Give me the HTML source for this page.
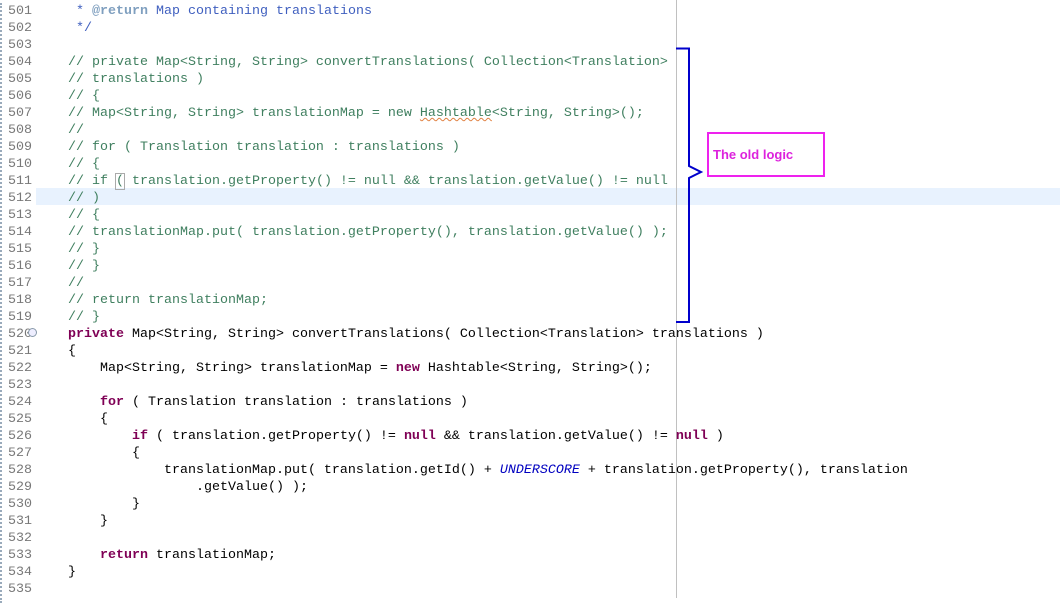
<!DOCTYPE html>
<html><head><style>
body{margin:0;width:1060px;height:598px;background:#fff;overflow:hidden;position:relative;font-family:"Liberation Mono",monospace;font-size:13.33px}
.ln{position:absolute;left:0;top:3px;width:34px;color:#787878;line-height:17px;padding-left:6px;border-left:2px dotted #9ab;height:600px}
.code{position:absolute;left:36px;top:3px;line-height:17px;white-space:pre;color:#000}
.c{color:#3f7f5f}.j{color:#3f5fbf}.t{color:#7f9fbf;font-weight:bold}.k{color:#7f0055;font-weight:bold}.u{color:#0000c0;font-style:italic}
.hl{position:absolute;left:36px;right:0;top:188px;height:17px;background:#e8f2fe}
.pm{position:absolute;left:676px;top:0;width:1px;height:598px;background:#c0c0c0}
.sq{text-decoration:underline wavy #e08040;text-decoration-thickness:1px}
</style></head><body>
<div class="hl"></div>
<div class="pm"></div>
<div class="ln">501<br>502<br>503<br>504<br>505<br>506<br>507<br>508<br>509<br>510<br>511<br>512<br>513<br>514<br>515<br>516<br>517<br>518<br>519<br>520<br>521<br>522<br>523<br>524<br>525<br>526<br>527<br>528<br>529<br>530<br>531<br>532<br>533<br>534<br>535</div>
<div style="position:absolute;left:28px;top:328px;width:7px;height:7px;border:1px solid #8899aa;border-radius:50%;background:#eef"></div>
<div class="code"><span class="j">     * <span class="t">@return</span> Map containing translations</span>
<span class="j">     */</span>

<span class="c">    // private Map&lt;String, String&gt; convertTranslations( Collection&lt;Translation&gt;</span>
<span class="c">    // translations )</span>
<span class="c">    // {</span>
<span class="c">    // Map&lt;String, String&gt; translationMap = new <span class="sq">Hashtable</span>&lt;String, String&gt;();</span>
<span class="c">    //</span>
<span class="c">    // for ( Translation translation : translations )</span>
<span class="c">    // {</span>
<span class="c">    // if <span style="outline:1px solid #aaa">(</span> translation.getProperty() != null &amp;&amp; translation.getValue() != null</span>
<span class="c">    // )</span>
<span class="c">    // {</span>
<span class="c">    // translationMap.put( translation.getProperty(), translation.getValue() );</span>
<span class="c">    // }</span>
<span class="c">    // }</span>
<span class="c">    //</span>
<span class="c">    // return translationMap;</span>
<span class="c">    // }</span>
    <span class="k">private</span> Map&lt;String, String&gt; convertTranslations( Collection&lt;Translation&gt; translations )
    {
        Map&lt;String, String&gt; translationMap = <span class="k">new</span> Hashtable&lt;String, String&gt;();

        <span class="k">for</span> ( Translation translation : translations )
        {
            <span class="k">if</span> ( translation.getProperty() != <span class="k">null</span> &amp;&amp; translation.getValue() != <span class="k">null</span> )
            {
                translationMap.put( translation.getId() + <span class="u">UNDERSCORE</span> + translation.getProperty(), translation
                    .getValue() );
            }
        }

        <span class="k">return</span> translationMap;
    }
</div>
<svg style="position:absolute;left:0;top:0" width="1060" height="598">
<polyline points="676,48.5 689,48.5 689,166 701,172 689,178 689,322 676,322" fill="none" stroke="#0000cc" stroke-width="2"/>
<rect x="708" y="133" width="116" height="43" fill="none" stroke="#ee22ee" stroke-width="2"/>
<text x="713" y="159" font-family="Liberation Sans,sans-serif" font-weight="bold" font-size="13" fill="#dd22dd">The old logic</text>
</svg>
</body></html>
